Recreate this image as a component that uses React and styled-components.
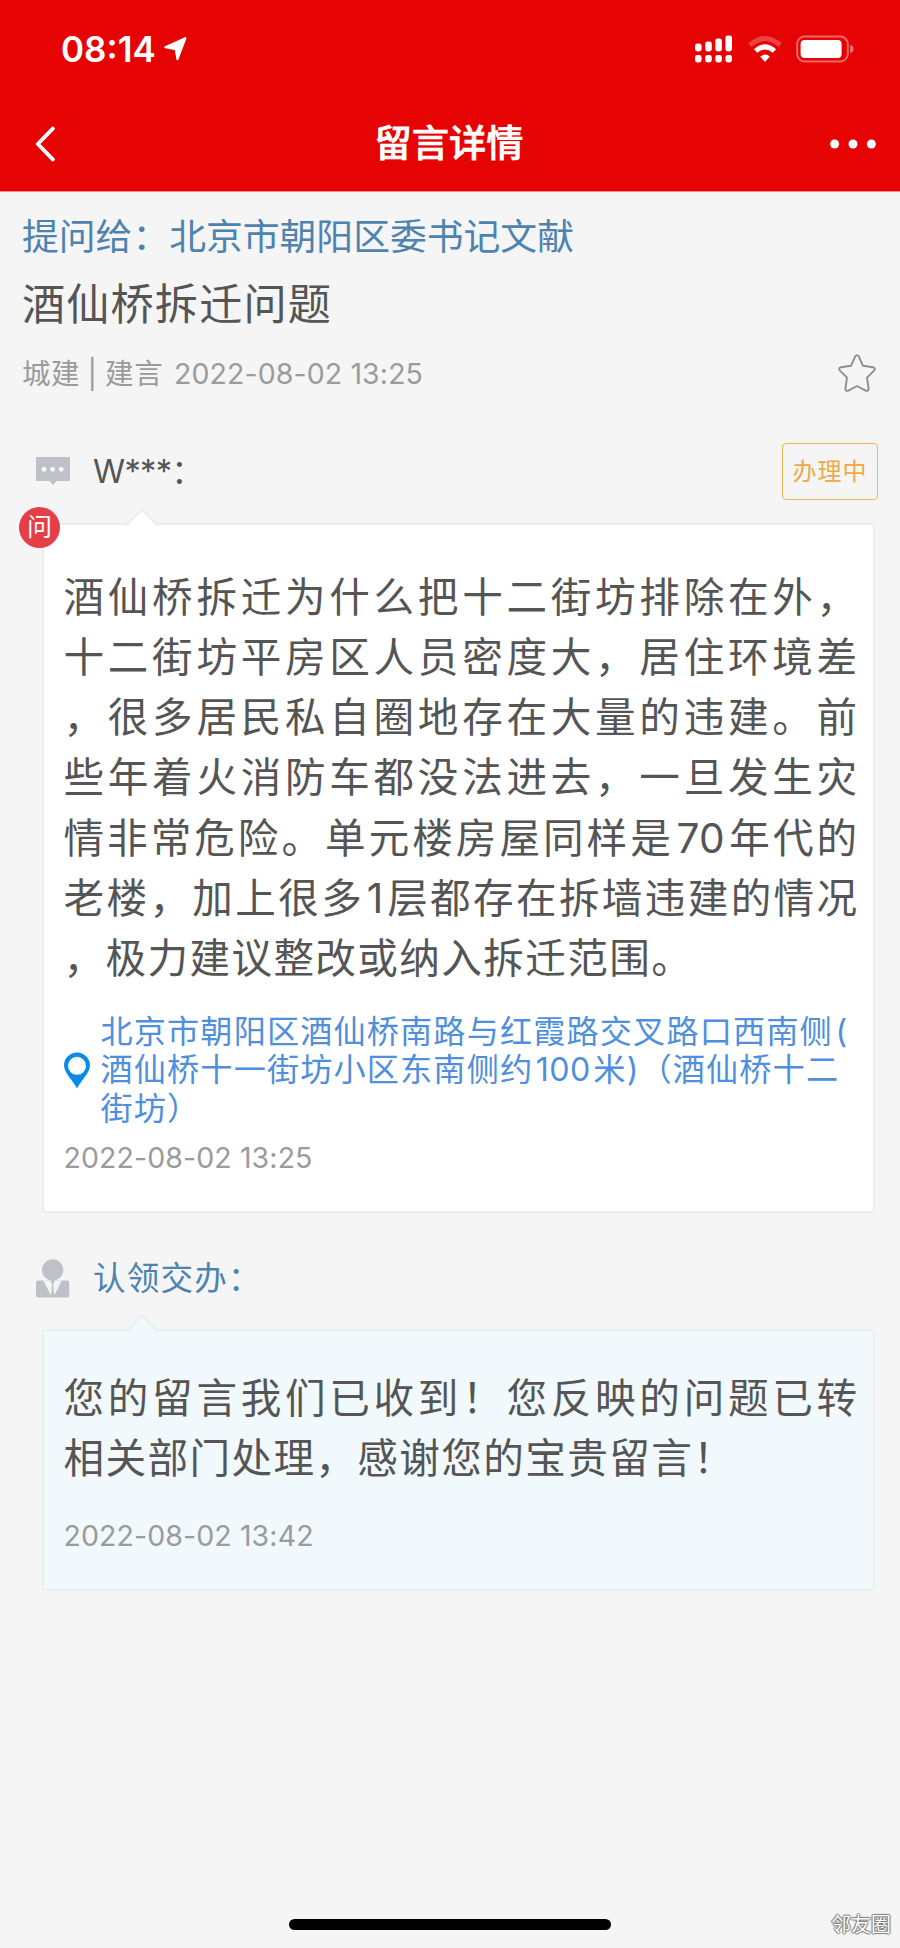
import styled, { createGlobalStyle } from 'styled-components'

const question = [
	'酒仙桥拆迁为什么把十二街坊排除在外，',
	'十二街坊平房区人员密度大，居住环境差',
	'，很多居民私自圈地存在大量的违建。前',
	'些年着火消防车都没法进去，一旦发生灾',
	'情非常危险。单元楼房屋同样是70年代的',
	'老楼，加上很多1层都存在拆墙违建的情况',
	'，极力建议整改或纳入拆迁范围。',
]

const address = [
	'北京市朝阳区酒仙桥南路与红霞路交叉路口西南侧(',
	'酒仙桥十一街坊小区东南侧约100米)（酒仙桥十二',
	'街坊）',
]

const reply = [
	'您的留言我们已收到！您反映的问题已转',
	'相关部门处理，感谢您的宝贵留言！',
]

// half-width runs get a little air on both sides
function Spaced({ text }) {
	return text.split(/(\d+|\()/).map((part, i) => (
		i % 2 ? <Latin key={i}>{part}</Latin> : part
	))
}

function StatusIcons() {
	return (
		<svg width="160" height="28" viewBox="0 0 160 28" fill="#fff">
			<rect x="0" y="8.5" width="6.6" height="8" rx="2.4" />
			<rect x="10.2" y="6.5" width="6.6" height="10" rx="2.4" />
			<rect x="20.3" y="3.5" width="6.6" height="13" rx="2.4" />
			<rect x="30.4" y="0.5" width="6.6" height="16" rx="2.4" />
			<rect x="0" y="20" width="6.6" height="7.4" rx="2.4" />
			<rect x="10.2" y="20" width="6.6" height="7.4" rx="2.4" />
			<rect x="20.3" y="20" width="6.6" height="7.4" rx="2.4" />
			<rect x="30.4" y="20" width="6.6" height="7.4" rx="2.4" />
			<path d="M54.8 10 Q70 -3 85.2 10" fill="none" stroke="#fff" strokeOpacity=".25" strokeWidth="5" />
			<path d="M60.6 16 Q70 7.6 79.4 16" fill="none" stroke="#fff" strokeWidth="5" />
			<path d="M70 27 L65.2 21.6 Q70 17.6 74.8 21.6 Z" />
			<rect x="102.2" y="1.6" width="50.6" height="24.8" rx="7.5" fill="none" stroke="#fff" strokeOpacity=".4" strokeWidth="2" />
			<rect x="105.6" y="5" width="41" height="18" rx="4" />
			<path d="M155.2 9.8 Q158.6 11 158.6 14 Q158.6 17 155.2 18.2 Z" fillOpacity=".45" />
		</svg>
	)
}

function CommentIcon() {
	return (
		<svg width="34" height="28" viewBox="0 0 34 28">
			<path d="M0 0H34V24H20.5L17 28L13.5 24H0Z" fill="#bec2c8" />
			<circle cx="8" cy="12.3" r="2.4" fill="#fff" />
			<circle cx="16.6" cy="12.3" r="2.4" fill="#fff" />
			<circle cx="25.2" cy="12.3" r="2.4" fill="#fff" />
		</svg>
	)
}

function OfficerIcon() {
	return (
		<svg width="34" height="39" viewBox="0 0 34 39" fill="#bec2c8">
			<circle cx="16.6" cy="11" r="10.7" />
			<path d="M2 21.6H31.5Q33.3 21.6 33.3 23.5V36.5Q33.3 38.5 31.5 38.5H2Q0 38.5 0 36.5V23.5Q0 21.6 2 21.6Z" />
			<path d="M7.4 21.4L15 36.5L16 25L14 21.4ZM25.8 21.4L18.2 36.5L17.2 25L19.2 21.4Z" fill="#f5f5f5" />
		</svg>
	)
}

function App() {
	return (
		<Page>
			<GlobalStyle />
			<Header>
				<StatusBar>
					<Time>08:14</Time>
					<svg width="23" height="24" viewBox="0 0 23 24">
						<path d="M1.4 10.2L21.4 1.2L13.4 22L11.8 12.2Z" fill="#fff" stroke="#fff" strokeWidth="2.2" strokeLinejoin="round" />
					</svg>
					<Spacer />
					<StatusIcons />
				</StatusBar>
				<NavBar>
					<svg width="20" height="36" viewBox="0 0 20 36" fill="none" stroke="#fff" strokeWidth="3.9" strokeLinecap="round" strokeLinejoin="round">
						<path d="M17.8 2.6L2.8 18L17.8 33.4" />
					</svg>
					<NavTitle>留言详情</NavTitle>
					<svg width="46" height="10" viewBox="0 0 46 10" fill="#fff">
						<circle cx="4.6" cy="5" r="4.5" />
						<circle cx="23" cy="5" r="4.5" />
						<circle cx="41.4" cy="5" r="4.5" />
					</svg>
				</NavBar>
			</Header>
			<Content>
				<Recipient>提问给：北京市朝阳区委书记文献</Recipient>
				<Title>酒仙桥拆迁问题</Title>
				<Meta>
					<Category>城建 | 建言</Category>
					<DateText>2022-08-02 13:25</DateText>
					<Spacer />
					<svg width="38" height="38" viewBox="0 0 38 38" fill="none" stroke="#8e8e8e" strokeWidth="1.9" strokeLinejoin="round">
						<path d="M17.2 2.4Q19 -.2 20.8 2.4L25 11.8L35 13.2Q38 14.2 36 16.6L29 23.6L30.6 34.6Q30.4 37.6 27.6 36.6L19 32L10.4 36.6Q7.6 37.6 7.4 34.6L9 23.6L2 16.6Q0 14.2 3 13.2L13 11.8Z" />
					</svg>
				</Meta>
				<AuthorRow $top={48}>
					<IconBox><CommentIcon /></IconBox>
					<Author $masked>W***：</Author>
					<Spacer />
					<Status>办理中</Status>
				</AuthorRow>
				<Card $bg="#fff" $border="#ececec" $height={690} $gap={23} $pad={42.5}>
					<Badge>问</Badge>
					<Message>
						{question.map((line, i) => (
							<Line key={line} $last={i === question.length - 1}><Spaced text={line} /></Line>
						))}
					</Message>
					<Location>
						<svg width="26" height="37" viewBox="0 0 26 37">
							<path d="M13 .5C6 .5 0 6 0 13.3C0 21 8 27 13 36.5C18 27 26 21 26 13.3C26 6 20 .5 13 .5ZM13 4.8A9 9 0 1 1 13 22.8A9 9 0 1 1 13 4.8Z" fill="#078ceb" fillRule="evenodd" />
						</svg>
						<Address>
							{address.map(line => <AddressLine key={line}><Spaced text={line} /></AddressLine>)}
						</Address>
					</Location>
					<CardDate $top={9}>2022-08-02 13:25</CardDate>
				</Card>
				<AuthorRow $top={36}>
					<IconBox><OfficerIcon /></IconBox>
					<Author $blue>认领交办：</Author>
				</AuthorRow>
				<Card $bg="#f1f9fd" $border="#e8eff0" $height={262} $gap={22} $pad={38}>
					<Message>
						{reply.map((line, i) => (
							<Line key={line} $last={i === reply.length - 1}>{line}</Line>
						))}
					</Message>
					<CardDate $top={26.5}>2022-08-02 13:42</CardDate>
				</Card>
			</Content>
			<Footer>
				<HomeIndicator />
				<Watermark>邻友圈</Watermark>
			</Footer>
		</Page>
	)
}

export default App;

const GlobalStyle = createGlobalStyle`
	* {
		box-sizing: border-box;
	}
	body {
		margin: 0;
		background-color: #f5f5f5;
		font-family: Inter, "Noto Sans CJK SC", sans-serif;
		text-spacing-trim: space-all;
	}
	svg {
		display: block;
		flex-shrink: 0;
	}
`
const Page = styled.div`
	width: 900px;
	height: 1948px;
	display: flex;
	flex-direction: column;
	background-color: #f5f5f5;
	overflow: hidden;
`
const Header = styled.header`
	height: 192px;
	flex-shrink: 0;
	background-color: #e60304;
	border-bottom: 1px solid #f98c8a;
	color: #fff;
`
const StatusBar = styled.div`
	height: 98px;
	padding: 0 45px 0 61px;
	display: flex;
	align-items: center;
`
const Time = styled.span`
	width: 103px;
	font-size: 35px;
	font-weight: 600;
	white-space: nowrap;
`
const Spacer = styled.div`
	flex: 1;
`
const NavBar = styled.div`
	height: 91px;
	padding: 0 24px 0 35px;
	display: flex;
	align-items: center;
	justify-content: space-between;
`
const NavTitle = styled.h1`
	margin: 0 0 0 13px;
	font-size: 37.2px;
	line-height: 44px;
	font-weight: 500;
	-webkit-text-stroke: .7px #fff;
`
const Content = styled.main`
	flex: 1;
	padding: 24px 22px 0 22px;
`
const Recipient = styled.div`
	height: 40px;
	line-height: 41px;
	font-size: 36.8px;
	color: #4d83ae;
`
const Title = styled.h2`
	margin: 24px 0 0;
	height: 48px;
	line-height: 48px;
	font-size: 43.2px;
	letter-spacing: 1.1px;
	font-weight: 400;
	color: #555;
`
const Meta = styled.div`
	height: 40px;
	margin-top: 26px;
	padding-right: 2px;
	display: flex;
	align-items: center;
	font-size: 28.5px;
	color: #9b9b9b;
	svg {
		margin-bottom: 2px;
	}
`
const Category = styled.span`
	width: 152px;
	line-height: 40px;
	letter-spacing: .6px;
	word-spacing: -1.2px;
	white-space: nowrap;
`
const DateText = styled.span`
	line-height: 40px;
	letter-spacing: .1px;
`
const AuthorRow = styled.div`
	height: 58px;
	margin-top: ${p => p.$top}px;
	display: flex;
	align-items: center;
`
const IconBox = styled.div`
	width: 71px;
	padding-left: 14px;
`
const Author = styled.div`
	line-height: 44px;
	font-size: 32.6px;
	letter-spacing: ${p => p.$masked ? '-.7px' : '1.2px'};
	color: ${p => p.$blue ? '#4d83ae' : '#555'};
`
const Status = styled.div`
	width: 96px;
	height: 57px;
	line-height: 56px;
	border: 1px solid #efb454;
	border-radius: 4px;
	text-align: center;
	font-size: 24px;
	letter-spacing: 1px;
	color: #f0a945;
`
const Card = styled.section`
	position: relative;
	width: 833px;
	height: ${p => p.$height}px;
	margin: ${p => p.$gap}px 0 0 20px;
	padding: ${p => p.$pad}px 18px 0 19.5px;
	border: 2px solid ${p => p.$border};
	border-radius: 4px;
	background-color: ${p => p.$bg};
	&::before {
		content: '';
		position: absolute;
		top: -12px;
		left: 86px;
		width: 22px;
		height: 22px;
		border: 2px solid ${p => p.$border};
		border-right: 0;
		border-bottom: 0;
		background: linear-gradient(135deg, ${p => p.$bg} 50%, transparent 50%);
		transform: rotate(45deg);
	}
`
const Badge = styled.div`
	position: absolute;
	top: -18px;
	left: -25px;
	width: 41px;
	height: 41px;
	border-radius: 50%;
	background-color: #e63e47;
	color: #fff;
	font-size: 25px;
	line-height: 41px;
	text-align: center;
`
const Message = styled.div`
	width: 795px;
	font-size: 40.6px;
	line-height: 60.3px;
	color: #555;
`
const Line = styled.div`
	letter-spacing: 1.4px;
	white-space: nowrap;
	text-align: justify;
	text-align-last: ${p => p.$last ? 'left' : 'justify'};
`
const Latin = styled.span`
	margin: 0 2.6px;
	letter-spacing: .4px;
`
const Location = styled.div`
	margin-top: 23px;
	display: flex;
	align-items: center;
	gap: 11px;
`
const Address = styled.div`
	font-size: 32.2px;
	line-height: 38.9px;
	letter-spacing: 1.1px;
	color: #4f8fdc;
`
const AddressLine = styled.div`
	white-space: nowrap;
`
const CardDate = styled.div`
	margin-top: ${p => p.$top}px;
	line-height: 40px;
	font-size: 28.5px;
	letter-spacing: .1px;
	color: #9b9b9b;
`
const Footer = styled.footer`
	position: relative;
	height: 29px;
	flex-shrink: 0;
`
const HomeIndicator = styled.div`
	width: 322px;
	height: 11px;
	margin: 0 auto;
	border-radius: 6px;
	background-color: #000;
`
const Watermark = styled.div`
	position: absolute;
	right: 9px;
	bottom: 9px;
	font-size: 20px;
	line-height: 28px;
	color: #fff;
	text-shadow: 1px 0 1px #777, -1px 0 1px #777, 0 1px 1px #777, 0 -1px 1px #777;
`
